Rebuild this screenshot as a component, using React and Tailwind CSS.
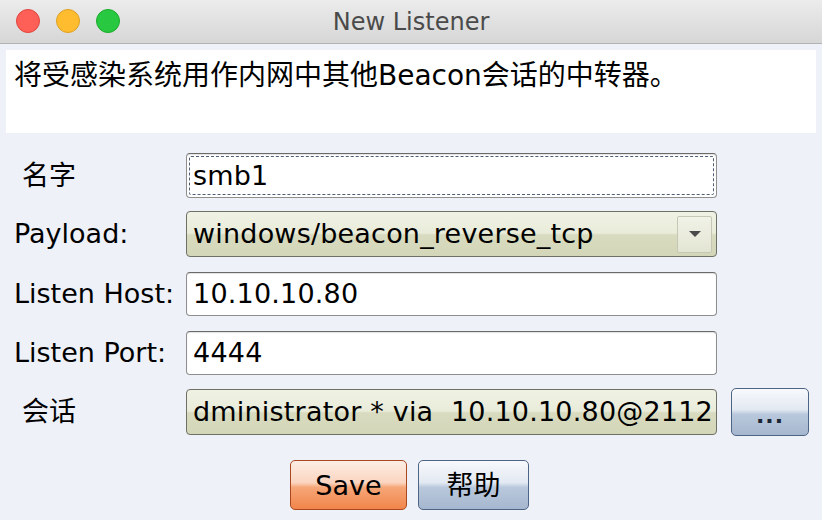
const font = { fontFamily: '"DejaVu Sans", "Noto Sans CJK SC", sans-serif' };

function Field({ children, focused, h }) {
  return (
    <div className={`relative flex w-[531px] items-center rounded-[4px] border border-[#8e8e8e] border-t-[#6a6a6a] bg-white pl-[6px] text-[27px] tracking-[0.2px] text-black shadow-[inset_0_1px_1px_rgba(0,0,0,0.12)] ${h}`}>
      {focused && <div className="pointer-events-none absolute inset-[2px] rounded-[2px] border border-dashed border-[#4f5f75]" />}
      <span className="leading-[34px]">{children}</span>
    </div>
  );
}

function Combo({ children, arrow }) {
  return (
    <div className="flex h-[46px] w-[531px] items-center rounded-[4px] border border-[#6d7063] bg-[linear-gradient(#eff1e4_0%,#eaecda_48%,#d8dbbf_52%,#d3d6b8_100%)] pl-[6px] pr-[4px] text-[27px] tracking-[0.2px] text-black">
      <span className="flex-1 overflow-hidden whitespace-nowrap leading-[36px]">{children}</span>
      {arrow && (
        <div className="flex h-[37px] w-[35px] items-center justify-center rounded-[2px] border border-[#c6c8b4] bg-[linear-gradient(#f1f2e8,#e3e5d3)]">
          <div className="h-0 w-0 border-x-[6px] border-t-[6px] border-x-transparent border-t-[#4a4a4a]" />
        </div>
      )}
    </div>
  );
}

function Row({ label, indent, children, mt }) {
  return (
    <div className={`flex items-center ${mt}`}>
      <div className={`w-[172px] text-[27px] leading-[34px] text-black ${indent ? "pl-[8px]" : ""}`}>{label}</div>
      {children}
    </div>
  );
}

export default function App() {
  return (
    <div className="flex h-[520px] w-[822px] flex-col overflow-hidden bg-[#eef1f8]" style={font}>
      <div className="relative flex h-[44px] shrink-0 items-center justify-center border-b border-[#b3b3b3] bg-[linear-gradient(#ececec,#d6d6d6)]">
        <div className="absolute left-[16px] top-[9px] flex gap-[16px]">
          <span className="h-[24px] w-[24px] rounded-full border border-[#e0443e] bg-[#fe5f57]" />
          <span className="h-[24px] w-[24px] rounded-full border border-[#dea123] bg-[#febc2e]" />
          <span className="h-[24px] w-[24px] rounded-full border border-[#1aab29] bg-[#28c840]" />
        </div>
        <span className="text-[24px] leading-none text-[#4a4a4a]">New Listener</span>
      </div>

      <div className="mx-[6px] mt-[6px] h-[83px] shrink-0 bg-white pl-[8px] pt-[8px] text-[28px] leading-[36px] text-black">
        将受感染系统用作内网中其他Beacon会话的中转器。
      </div>

      <div className="pl-[14px]">
        <Row label="名字" indent mt="mt-[20px]">
          <Field focused h="h-[45px]">smb1</Field>
        </Row>
        <Row label="Payload:" mt="mt-[13px]">
          <Combo arrow>windows/beacon_reverse_tcp</Combo>
        </Row>
        <Row label="Listen Host:" mt="mt-[15px]">
          <Field h="h-[44px]">10.10.10.80</Field>
        </Row>
        <Row label="Listen Port:" mt="mt-[15px]">
          <Field h="h-[44px]">4444</Field>
        </Row>
        <Row label="会话" indent mt="mt-[13px]">
          <Combo>dministrator * via&nbsp; 10.10.10.80@2112</Combo>
          <button className="ml-[14px] flex h-[48px] w-[78px] items-center justify-center rounded-[5px] border border-[#4d6584] bg-[linear-gradient(#f7f9fc_0%,#e3e9f2_45%,#b9c8dc_55%,#a5b7cf_100%)] pt-[8px] text-[22px] font-bold leading-[26px] tracking-[1px] text-[#1a2533]">
            ...
          </button>
        </Row>
      </div>

      <div className="mt-[24px] flex justify-center gap-[11px] pr-[3px]">
        <button className="h-[50px] w-[117px] rounded-[5px] border border-[#a94820] bg-[linear-gradient(#fdede4_0%,#fbd5c0_45%,#f6a678_55%,#f1854b_100%)] text-[27px] leading-none text-black">
          Save
        </button>
        <button className="h-[50px] w-[111px] rounded-[5px] border border-[#4d6584] bg-[linear-gradient(#f7f9fc_0%,#e3e9f2_45%,#b9c8dc_55%,#a5b7cf_100%)] text-[27px] leading-none text-black">
          帮助
        </button>
      </div>
    </div>
  );
}
